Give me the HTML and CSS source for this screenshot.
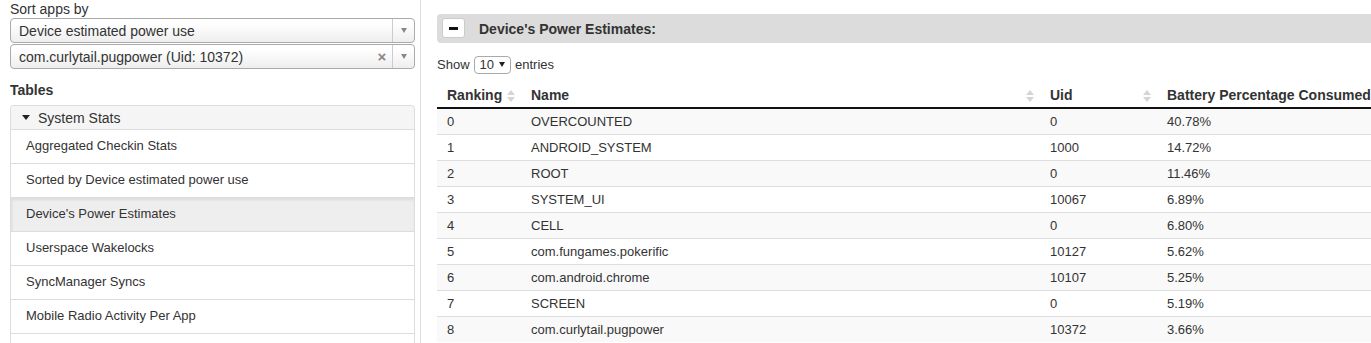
FILE: index.html
```html
<!DOCTYPE html>
<html lang="en">
<head>
  <meta charset="UTF-8" />
  <title>Battery Historian</title>
  <link rel="stylesheet" href="styles.css">
</head>
<body>
  <div class="page">

    <!-- Left column: app picker + table list -->
    <div class="sidebar">
      <div class="label">Sort apps by</div>
      <div class="picker">
        <span class="picker-text">Device estimated power use</span>
        <span class="picker-arrow"><i class="tri"></i></span>
      </div>
      <div class="picker picker-app">
        <span class="picker-text">com.curlytail.pugpower (Uid: 10372)</span>
        <span class="picker-clear">&times;</span>
        <span class="picker-arrow"><i class="tri"></i></span>
      </div>

      <div class="tables-title">Tables</div>
      <div class="panel">
        <div class="panel-heading"><i class="caret"></i>System Stats</div>
        <div class="list-item">Aggregated Checkin Stats</div>
        <div class="list-item">Sorted by Device estimated power use</div>
        <div class="list-item active">Device's Power Estimates</div>
        <div class="list-item">Userspace Wakelocks</div>
        <div class="list-item">SyncManager Syncs</div>
        <div class="list-item">Mobile Radio Activity Per App</div>
        <div class="list-item">&nbsp;</div>
      </div>
    </div>

    <!-- Right column: selected table -->
    <div class="main">
      <div class="section-bar">
        <button class="toggle"><span class="minus"></span></button>
        <span class="section-title">Device's Power Estimates:</span>
      </div>

      <div class="length">
        Show
        <span class="length-select">10 <i class="small-tri"></i></span>
        entries
      </div>

      <table class="data">
        <colgroup>
          <col style="width:84px">
          <col style="width:519px">
          <col style="width:117px">
          <col>
        </colgroup>
        <thead>
          <tr>
            <th>Ranking <svg class="sort" width="8" height="14" viewBox="0 0 8 14"><polygon points="0,6 4,1 8,6"/><polygon points="0,8 4,13 8,8"/></svg></th>
            <th>Name <svg class="sort" width="8" height="14" viewBox="0 0 8 14"><polygon points="0,6 4,1 8,6"/><polygon points="0,8 4,13 8,8"/></svg></th>
            <th>Uid <svg class="sort" width="8" height="14" viewBox="0 0 8 14"><polygon points="0,6 4,1 8,6"/><polygon points="0,8 4,13 8,8"/></svg></th>
            <th>Battery Percentage Consumed</th>
          </tr>
        </thead>
        <tbody>
          <tr><td>0</td><td>OVERCOUNTED</td><td>0</td><td>40.78%</td></tr>
          <tr><td>1</td><td>ANDROID_SYSTEM</td><td>1000</td><td>14.72%</td></tr>
          <tr><td>2</td><td>ROOT</td><td>0</td><td>11.46%</td></tr>
          <tr><td>3</td><td>SYSTEM_UI</td><td>10067</td><td>6.89%</td></tr>
          <tr><td>4</td><td>CELL</td><td>0</td><td>6.80%</td></tr>
          <tr><td>5</td><td>com.fungames.pokerific</td><td>10127</td><td>5.62%</td></tr>
          <tr><td>6</td><td>com.android.chrome</td><td>10107</td><td>5.25%</td></tr>
          <tr><td>7</td><td>SCREEN</td><td>0</td><td>5.19%</td></tr>
          <tr><td>8</td><td>com.curlytail.pugpower</td><td>10372</td><td>3.66%</td></tr>
        </tbody>
      </table>
    </div>

  </div>
</body>
</html>
```

FILE: styles.css
```css
* {
  box-sizing: border-box;
}

html, body {
  margin: 0;
  padding: 0;
  height: 100%;
  overflow: hidden;
}

body {
  background: #fff;
  color: #333;
  font-family: 'Liberation Sans', Helvetica, Arial, sans-serif;
  font-size: 14px;
}

.page {
  display: flex;
  height: 100%;
}

/* Sidebar */
.sidebar {
  flex: 0 0 421px;
  padding: 0 5px 0 10px;
  border-right: 1px solid #ddd;
}

.label {
  line-height: 17px;
  padding-top: 1px;
}

.picker {
  display: flex;
  align-items: center;
  height: 25px;
  border: 1px solid #aaa;
  border-radius: 4px;
  background: linear-gradient(#fff 20%, #eee 100%);
  font-size: 14px;
}

.picker-app {
  margin-top: 1px;
}

.picker-text {
  flex: 1;
  padding-left: 8px;
  white-space: nowrap;
}

.picker-clear {
  width: 20px;
  color: #888;
  font-size: 15px;
  font-weight: bold;
  text-align: center;
}

.picker-arrow {
  display: flex;
  align-items: center;
  justify-content: center;
  width: 22px;
  height: 100%;
  border-left: 1px solid #ccc;
}

.tri {
  width: 0;
  height: 0;
  border-left: 3px solid transparent;
  border-right: 3px solid transparent;
  border-top: 5px solid #888;
}

.tables-title {
  margin-top: 11px;
  font-weight: bold;
  line-height: 20px;
  margin-bottom: 5px;
}

.panel {
  border: 1px solid #ddd;
  border-bottom: none;
  border-radius: 4px 4px 0 0;
}

.panel-heading {
  display: flex;
  align-items: center;
  height: 24px;
  padding-left: 11px;
  background: #f5f5f5;
  border-bottom: 1px solid #ddd;
  border-radius: 4px 4px 0 0;
}

.caret {
  width: 0;
  height: 0;
  margin-right: 8px;
  border-left: 4px solid transparent;
  border-right: 4px solid transparent;
  border-top: 5px solid #222;
}

.list-item {
  height: 34px;
  line-height: 32px;
  padding-left: 15px;
  font-size: 13px;
  border-bottom: 1px solid #ddd;
}

.list-item.active {
  background: #eee;
  box-shadow: inset 1px 2px 3px rgba(0, 0, 0, 0.08);
}

/* Main */
.main {
  flex: 0 0 980px;
  padding: 14px 0 0 16px;
}

.section-bar {
  display: flex;
  align-items: center;
  height: 29px;
  padding-left: 5px;
  background: #dcdcdc;
  border-radius: 4px;
}

.toggle {
  display: flex;
  align-items: center;
  justify-content: center;
  width: 23px;
  height: 20px;
  margin-top: -1px;
  padding: 0;
  background: #fff;
  border: 1px solid #ccc;
  border-radius: 3px;
}

.minus {
  width: 9px;
  height: 3px;
  background: #111;
}

.section-title {
  margin-left: 14px;
  font-weight: bold;
}

.length {
  display: flex;
  align-items: center;
  gap: 4px;
  margin-top: 12px;
  height: 19px;
  font-size: 13px;
}

.length-select {
  display: flex;
  align-items: center;
  gap: 5px;
  height: 18px;
  padding: 0 5px;
  border: 1px solid #aaa;
  border-radius: 4px;
  font-size: 13px;
}

.small-tri {
  width: 0;
  height: 0;
  border-left: 3px solid transparent;
  border-right: 3px solid transparent;
  border-top: 5px solid #222;
}

.data {
  margin-top: 8px;
  width: 100%;
  border-collapse: collapse;
  table-layout: fixed;
}

.data th {
  position: relative;
  padding: 5px 10px 4px;
  line-height: 16px;
  text-align: left;
  white-space: nowrap;
  border-bottom: 2px solid #111;
}

.sort {
  position: absolute;
  right: 6px;
  top: 7px;
  fill: #d5d5d5;
}

.data td {
  padding: 4px 10px;
  line-height: 17px;
  font-size: 13px;
  border-top: 1px solid #ddd;
}

.data tbody tr:first-child td {
  border-top: none;
  height: 26px;
}

.data tbody tr:nth-child(odd) {
  background: #f9f9f9;
}
```
